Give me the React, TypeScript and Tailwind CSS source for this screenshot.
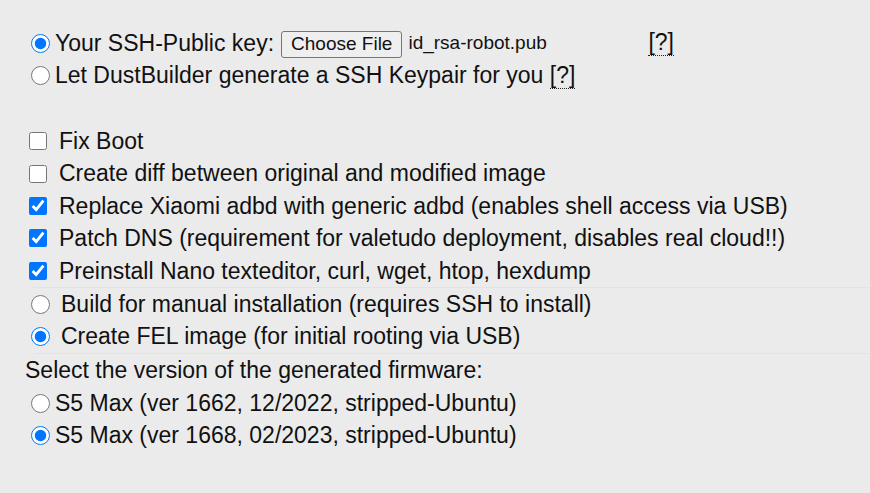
import React from 'react'

function Radio({ checked }: { checked?: boolean }) {
    return (
        <input
            type="radio"
            defaultChecked={ checked }
            className="w-[19px] h-[19px] m-0 accent-[#0075ff] shrink-0"
        />
    )
}

function Check({ checked }: { checked?: boolean }) {
    return (
        <input
            type="checkbox"
            defaultChecked={ checked }
            className="w-[18px] h-[18px] m-0 accent-[#0075ff] shrink-0"
        />
    )
}

function Help() {
    return <abbr className="no-underline border-b border-dotted border-[#222] leading-[25px] cursor-help">[?]</abbr>
}

const options = [
    { label: 'Fix Boot', checked: false },
    { label: 'Create diff between original and modified image', checked: false },
    { label: 'Replace Xiaomi adbd with generic adbd (enables shell access via USB)', checked: true },
    { label: 'Patch DNS (requirement for valetudo deployment, disables real cloud!!)', checked: true },
    { label: 'Preinstall Nano texteditor, curl, wget, htop, hexdump', checked: true },
]

export default function App() {
    return (
        <div
            className="min-h-[493px] w-full bg-[#ebebeb] text-[#111] text-[23px] pt-[27px] pl-[25px]"
            style={{ fontFamily: '"Liberation Sans", Arial, sans-serif' }}
        >
            <div className="flex items-center h-[32px] pl-[6px]">
                <Radio checked />
                <span className="ml-[5px]">Your SSH-Public key:</span>
                <span className="ml-[7px] mt-[2px] h-[27px] px-[9px] flex items-center border border-[#767676] rounded-[3px] bg-[#efefef] text-[19px]">Choose File</span>
                <span className="ml-[6px] w-[240px] text-[19px]">id_rsa-robot.pub</span>
                <Help />
            </div>
            <div className="flex items-center h-[32px] pl-[6px]">
                <Radio />
                <span className="ml-[5px]">Let DustBuilder generate a SSH Keypair for you <Help /></span>
            </div>

            <div className="h-[34px]" />

            { options.map(o => (
                <div key={ o.label } className="flex items-center h-[32.4px] pl-[4px]">
                    <Check checked={ o.checked } />
                    <span className="ml-[12px]">{ o.label }</span>
                </div>
            )) }

            <div className="border-t border-[#e3e3e3] ml-[8px]">
                <div className="flex items-center h-[32.4px] -ml-[2px]">
                    <Radio />
                    <span className="ml-[11px]">Build for manual installation (requires SSH to install)</span>
                </div>
                <div className="flex items-center h-[32.4px] -ml-[2px]">
                    <Radio checked />
                    <span className="ml-[11px]">Create FEL image (for initial rooting via USB)</span>
                </div>
            </div>

            <div className="border-t border-[#e3e3e3] ml-[10px]" />
            <div className="h-[34px] flex items-center">Select the version of the generated firmware:</div>
            <div className="flex items-center h-[32px] pl-[6px]">
                <Radio />
                <span className="ml-[5px]">S5 Max (ver 1662, 12/2022, stripped-Ubuntu)</span>
            </div>
            <div className="flex items-center h-[32px] pl-[6px]">
                <Radio checked />
                <span className="ml-[5px]">S5 Max (ver 1668, 02/2023, stripped-Ubuntu)</span>
            </div>
        </div>
    )
}
